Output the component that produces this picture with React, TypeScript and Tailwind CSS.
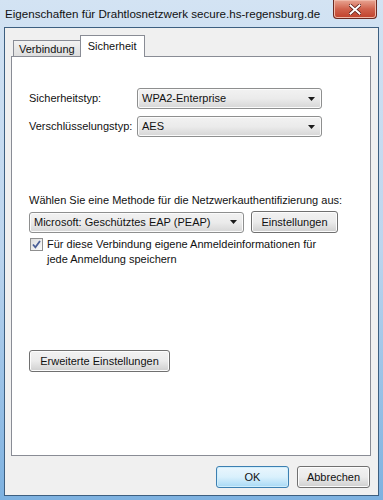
import React from 'react';

const font = { fontFamily: '"Segoe UI", "Liberation Sans", Arial, sans-serif' };

const Arrow: React.FC = () => (
  <svg width="7" height="4" viewBox="0 0 7 4" className="shrink-0">
    <path d="M0 0h7L3.5 4z" fill="#1a1a1a" />
  </svg>
);

const Select: React.FC<{ value: string; width: string }> = ({ value, width }) => (
  <div
    className={`${width} h-[21px] flex items-center justify-between pl-[4px] pr-[6px] rounded-[3px] border border-[#8e8f8f] bg-gradient-to-b from-[#f2f2f2] via-[#ebebeb] to-[#d6d6d6] text-[11px] text-[#111] shadow-[inset_0_0_0_1px_#fbfbfb]`}
  >
    <span>{value}</span>
    <Arrow />
  </div>
);

const Button: React.FC<{ label: string; width: string; primary?: boolean }> = ({
  label,
  width,
  primary,
}) => (
  <div
    className={
      primary
        ? `${width} h-[22px] flex items-center justify-center rounded-[3px] border border-[#3c7fb1] bg-gradient-to-b from-[#eaf6fd] via-[#d9f0fc] to-[#a7d9f5] text-[11px] text-[#111] shadow-[inset_0_0_0_1px_#d0eefc]`
        : `${width} h-[22px] flex items-center justify-center rounded-[3px] border border-[#707070] bg-gradient-to-b from-[#f2f2f2] via-[#ebebeb] to-[#cfcfcf] text-[11px] text-[#111] shadow-[inset_0_0_0_1px_#fcfcfc]`
    }
  >
    {label}
  </div>
);

export default function App() {
  return (
    <div
      style={font}
      className="w-[383px] h-[500px] flex flex-col bg-gradient-to-b from-[#d3e3f3] via-[#bcd5ee] to-[#7db1e0]"
    >
      {/* title bar */}
      <div className="h-[27px] flex items-start justify-between pl-[5px] pr-[6px] shrink-0">
        <span className="mt-[6px] text-[11.6px] leading-[16px] text-[#111] whitespace-nowrap">
          Eigenschaften für Drahtlosnetzwerk secure.hs-regensburg.de
        </span>
        <div className="w-[44px] h-[19px] flex items-center justify-center rounded-b-[4px] border border-t-0 border-[#6b2a22] bg-gradient-to-b from-[#e8a593] via-[#d0624d] to-[#c0402a] shadow-[inset_0_0_0_1px_#f0b8a8]">
          <svg width="12" height="11" viewBox="0 0 12 11">
            <path
              d="M1.5 1.5l9 8M10.5 1.5l-9 8"
              stroke="#5a1a14"
              strokeWidth="3.6"
              strokeLinecap="square"
            />
            <path
              d="M1.5 1.5l9 8M10.5 1.5l-9 8"
              stroke="#ffffff"
              strokeWidth="2"
              strokeLinecap="square"
            />
          </svg>
        </div>
      </div>

      {/* client area */}
      <div className="flex-1 mx-[4px] mb-[4px] border border-[#3d5f80] bg-[#f0f0f0] flex flex-col pl-[6px] pr-[7px]">
        {/* tabs */}
        <div className="flex items-end h-[28px] pl-[2px] shrink-0">
          <div className="h-[17px] mb-[-1px] px-[5px] flex items-center border border-b-0 border-[#898c95] bg-gradient-to-b from-[#f2f2f2] to-[#dcdcdc] text-[11px] text-[#111]">
            Verbindung
          </div>
          <div className="relative z-10 h-[22px] mb-[-1px] ml-[-1px] px-[7px] flex items-start pt-[2px] border border-b-0 border-[#898c95] bg-white text-[11px] text-[#111]">
            Sicherheit
          </div>
        </div>

        {/* tab panel */}
        <div className="h-[400px] border border-[#898c95] bg-white flex flex-col pl-[17px] text-[11px] text-[#111] shrink-0">
          <div className="mt-[31px] flex items-center">
            <span className="w-[108px]">Sicherheitstyp:</span>
            <Select value="WPA2-Enterprise" width="w-[185px]" />
          </div>
          <div className="mt-[7px] flex items-center">
            <span className="w-[108px]">Verschlüsselungstyp:</span>
            <Select value="AES" width="w-[185px]" />
          </div>

          <div className="mt-[56px] leading-[15px]">
            Wählen Sie eine Methode für die Netzwerkauthentifizierung aus:
          </div>
          <div className="mt-[3px] flex items-center gap-[7px]">
            <Select value="Microsoft: Geschütztes EAP (PEAP)" width="w-[215px]" />
            <Button label="Einstellungen" width="w-[87px]" />
          </div>

          <div className="mt-[4px] flex items-start pl-[1px]">
            <div className="mt-[1px] w-[13px] h-[13px] shrink-0 flex items-center justify-center border border-[#8f8f8f] bg-gradient-to-br from-[#dcdcdc] to-[#fcfcfc]">
              <svg width="9" height="9" viewBox="0 0 9 9">
                <path
                  d="M1 4.5l2.4 2.8L8 1"
                  fill="none"
                  stroke="#4a5f97"
                  strokeWidth="1.8"
                />
              </svg>
            </div>
            <span className="ml-[4px] leading-[15px] w-[275px]">
              Für diese Verbindung eigene Anmeldeinformationen für jede Anmeldung speichern
            </span>
          </div>

          <div className="mt-[83px]">
            <Button label="Erweiterte Einstellungen" width="w-[141px]" />
          </div>
        </div>

        {/* footer buttons */}
        <div className="flex justify-end gap-[8px] mt-[10px] pr-[1px]">
          <Button label="OK" width="w-[73px]" primary />
          <Button label="Abbrechen" width="w-[73px]" />
        </div>
      </div>
    </div>
  );
}
